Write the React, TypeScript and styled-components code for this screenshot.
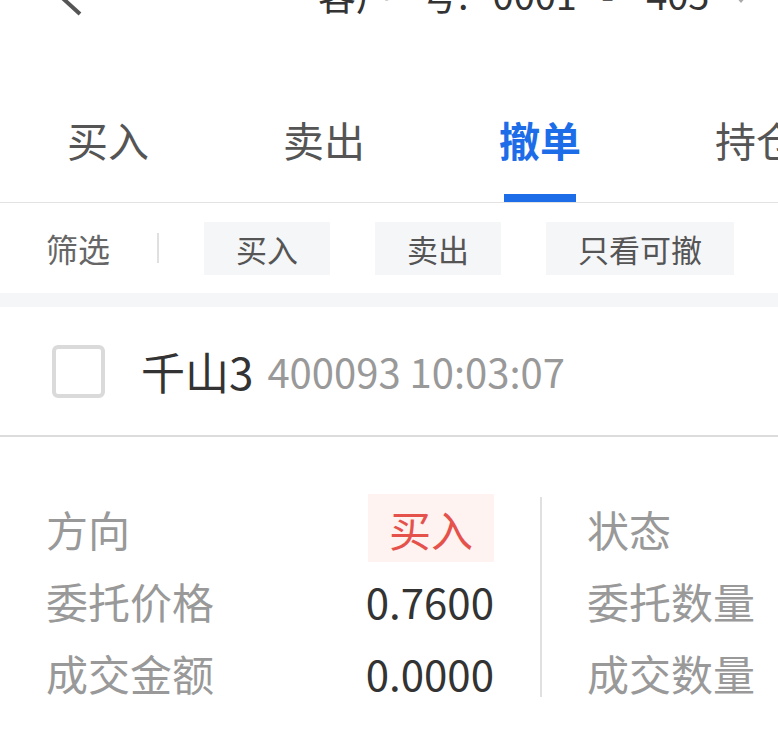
import { FC, useState } from "react";
import styled, { createGlobalStyle } from "styled-components";

const GlobalStyle = createGlobalStyle`
   html, body {
      margin: 0;
      padding: 0;
      background: #fff;
   }
   body {
      font-family: "Noto Sans CJK SC", "Noto Sans", sans-serif;
   }
   * {
      box-sizing: border-box;
   }
`;

// 상단 계좌 표시 (잘려서 아랫부분만 보임)
const headParts = [
   { text: "客户", ml: 234 },
   { text: "号:", ml: 26 },
   { text: "0001", ml: 24 },
   { text: "-", ml: 24 },
   { text: "405", ml: 32 },
];

const tabs = ["买入", "卖出", "撤单", "持仓"];
const filters = ["买入", "卖出", "只看可撤"];

// 委托 상세
const details = [
   { label: "方向", value: "买入", tag: true, right: "状态" },
   { label: "委托价格", value: "0.7600", tag: false, right: "委托数量" },
   { label: "成交金额", value: "0.0000", tag: false, right: "成交数量" },
];

const App: FC = () => {
   const [tab, setTab] = useState<string>("撤单");
   const [filter, setFilter] = useState<string>("");
   const [checked, setChecked] = useState<boolean>(false);

   return (
      <>
         <GlobalStyle />
         <Styled.Page>
            <Styled.Header>
               <Styled.Back width="32" height="48" viewBox="0 0 32 48">
                  <path d="M28 6 L6 26 L28 46" fill="none" stroke="#555" strokeWidth="4" />
               </Styled.Back>
               <Styled.Title>
                  {headParts.map((h, i) => (
                     <Styled.HeadPart key={i} $ml={h.ml}>{h.text}</Styled.HeadPart>
                  ))}
                  <Styled.Caret width="14" height="10" viewBox="0 0 14 10">
                     <path d="M1 1 L13 1 L7 8 Z" fill="#aaa" />
                  </Styled.Caret>
               </Styled.Title>
            </Styled.Header>

            <Styled.TabBar>
               {tabs.map((t) => (
                  <Styled.Tab key={t} $active={tab === t} onClick={() => setTab(t)}>
                     <span>{t}</span>
                     <i />
                  </Styled.Tab>
               ))}
            </Styled.TabBar>

            <Styled.FilterRow>
               <Styled.FilterLabel>筛选</Styled.FilterLabel>
               <Styled.VLine />
               {filters.map((f) => (
                  <Styled.FilterBtn key={f} $on={filter === f} onClick={() => setFilter(filter === f ? "" : f)}>
                     {f}
                  </Styled.FilterBtn>
               ))}
            </Styled.FilterRow>

            <Styled.Band />

            <Styled.OrderHead>
               <Styled.Check $on={checked} onClick={() => setChecked(!checked)} />
               <Styled.Name>千山3</Styled.Name>
               <Styled.Meta>400093 10:03:07</Styled.Meta>
            </Styled.OrderHead>

            <Styled.Detail>
               <Styled.Col>
                  {details.map((d) => (
                     <Styled.Row key={d.label}>
                        <Styled.Label>{d.label}</Styled.Label>
                        {d.tag ? <Styled.Tag>{d.value}</Styled.Tag> : <Styled.Value>{d.value}</Styled.Value>}
                     </Styled.Row>
                  ))}
               </Styled.Col>
               <Styled.ColLine />
               <Styled.Col>
                  {details.map((d) => (
                     <Styled.Row key={d.right}>
                        <Styled.Label>{d.right}</Styled.Label>
                     </Styled.Row>
                  ))}
               </Styled.Col>
            </Styled.Detail>
         </Styled.Page>
      </>
   );
};

const Styled = {
   Page: styled.div`
      width: 778px;
      min-height: 756px;
      overflow: hidden;
      background: #fff;
   `,
   Header: styled.div`
      display: flex;
      align-items: flex-end;
      height: 16px;
      overflow: hidden;
   `,
   Back: styled.svg`
      flex: none;
      margin-left: 52px;
   `,
   Title: styled.div`
      display: flex;
      align-items: flex-end;
      margin-bottom: 3px;
      font-size: 38px;
      line-height: 38px;
      color: #333;
      white-space: nowrap;
   `,
   HeadPart: styled.span<{ $ml: number }>`
      margin-left: ${(p) => p.$ml}px;
   `,
   Caret: styled.svg`
      margin-left: 25px;
      margin-bottom: 8px;
   `,
   TabBar: styled.div`
      display: flex;
      align-items: flex-end;
      height: 187px;
      border-bottom: 1px solid #e2e2e2;
   `,
   Tab: styled.div<{ $active: boolean }>`
      flex: 0 0 216px;
      display: flex;
      flex-direction: column;
      align-items: center;
      cursor: pointer;
      span {
         font-size: 41px;
         line-height: 56px;
         margin-bottom: 27px;
         color: ${(p) => (p.$active ? "#1d6ce8" : "#555")};
         font-weight: ${(p) => (p.$active ? 700 : 400)};
      }
      i {
         display: block;
         width: 72px;
         height: 8px;
         background: ${(p) => (p.$active ? "#1d6ce8" : "transparent")};
      }
   `,
   FilterRow: styled.div`
      display: flex;
      align-items: center;
      height: 90px;
      padding-left: 46px;
      gap: 45px;
   `,
   FilterLabel: styled.div`
      font-size: 32px;
      color: #666;
      margin-right: 2px;
   `,
   VLine: styled.div`
      width: 2px;
      height: 30px;
      background: #e0e0e0;
   `,
   FilterBtn: styled.div<{ $on: boolean }>`
      height: 53px;
      padding: 0 32px;
      display: flex;
      align-items: center;
      font-size: 31px;
      color: ${(p) => (p.$on ? "#1d6ce8" : "#555")};
      background: #f5f6f8;
      cursor: pointer;
   `,
   Band: styled.div`
      height: 14px;
      background: #f5f6f8;
   `,
   OrderHead: styled.div`
      display: flex;
      align-items: center;
      height: 130px;
      padding-left: 52px;
      border-bottom: 2px solid #dcdcdc;
   `,
   Check: styled.div<{ $on: boolean }>`
      width: 53px;
      height: 53px;
      border: 4px solid #dadada;
      border-radius: 6px;
      background: ${(p) => (p.$on ? "#1d6ce8" : "#fff")};
      margin-right: 36px;
      cursor: pointer;
   `,
   Name: styled.div`
      font-size: 44px;
      color: #333;
      margin-right: 14px;
   `,
   Meta: styled.div`
      font-size: 40px;
      color: #999;
   `,
   Detail: styled.div`
      display: flex;
      padding-top: 55px;
      padding-left: 46px;
   `,
   Col: styled.div`
      flex: 0 0 448px;
      display: flex;
      flex-direction: column;
   `,
   ColLine: styled.div`
      flex: none;
      width: 2px;
      height: 200px;
      margin: 5px 45px 0 46px;
      background: #e0e0e0;
   `,
   Row: styled.div`
      display: flex;
      align-items: center;
      justify-content: space-between;
      height: 72px;
   `,
   Label: styled.div`
      font-size: 42px;
      color: #999;
      white-space: nowrap;
   `,
   Value: styled.div`
      font-size: 42px;
      color: #333;
   `,
   Tag: styled.div`
      display: flex;
      align-items: center;
      height: 68px;
      padding: 0 21px;
      font-size: 42px;
      color: #e5524c;
      background: #fff3f2;
   `,
};

export default App;
